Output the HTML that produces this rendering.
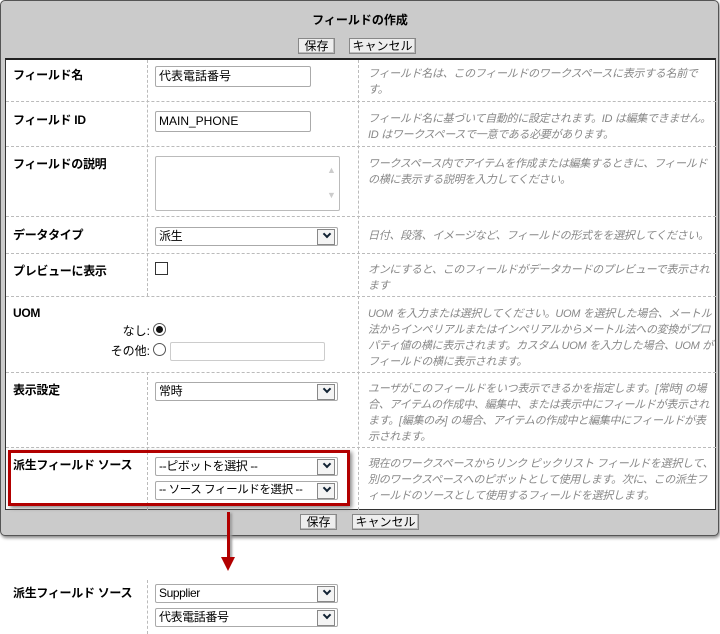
<!DOCTYPE html>
<html><head><meta charset="utf-8"><style>
*{box-sizing:border-box;margin:0;padding:0}
body{width:720px;height:634px;background:#fff;font-family:"Liberation Sans","Noto Sans CJK JP",sans-serif;font-size:12px;color:#000;position:relative;overflow:hidden}
.a{position:absolute}
.panel{left:0;top:0;width:719px;height:536px;background:#cbcbcb;border:1px solid #555;border-radius:5px;box-shadow:1px 2px 3px #888}
.white{left:5px;top:58px;width:711px;height:452px;background:#fff;border:1px solid #333;border-top:2px solid #222}
.btn{height:16px;border:1px solid #888;background:#eee;font-size:12px;line-height:14px;text-align:center;box-shadow:inset -1px -1px 0 #bbb}
.hd{border-top:1px dashed #bbb;height:0}
.vd{border-left:1px dashed #bbb;width:0}
.lbl{font-weight:bold;font-size:12px;left:13px;letter-spacing:-0.3px}
.desc{left:368px;width:346px;color:#888;font-style:italic;font-size:11px;line-height:16px;letter-spacing:-0.3px}
.inp{border:1px solid #aaa;height:21px;background:#fff;padding:2px 3px;font-size:12px;line-height:15px;border-radius:2px}
.sel{border:1px solid #aaa;height:19px;background:#fff;padding:1px 3px;font-size:12px;line-height:15px;border-radius:2px;letter-spacing:-0.4px;white-space:nowrap;overflow:hidden}
.sel:after{content:"";position:absolute;right:2px;top:1px;width:16px;height:14px;border:1px solid #888;background:#f4f4f4}
.sel i{position:absolute;right:7px;top:3px;width:6px;height:6px;border-right:2px solid #123;border-bottom:2px solid #123;transform:rotate(45deg);z-index:2}
</style></head><body>
<div class="a panel"></div>
<div class="a" style="left:0;top:11px;width:720px;text-align:center;font-weight:bold;font-size:12px">フィールドの作成</div>
<div class="a btn" style="left:298px;top:38px;width:37px">保存</div>
<div class="a btn" style="left:349px;top:38px;width:67px">キャンセル</div>
<div class="a white"></div>
<div class="a btn" style="left:300px;top:514px;width:37px">保存</div>
<div class="a btn" style="left:352px;top:514px;width:67px">キャンセル</div>

<div class="a hd" style="left:6px;top:101px;width:710px"></div>
<div class="a hd" style="left:6px;top:146px;width:710px"></div>
<div class="a hd" style="left:6px;top:216px;width:710px"></div>
<div class="a hd" style="left:6px;top:253px;width:710px"></div>
<div class="a hd" style="left:6px;top:296px;width:710px"></div>
<div class="a hd" style="left:6px;top:372px;width:710px"></div>
<div class="a hd" style="left:6px;top:447px;width:710px"></div>
<div class="a vd" style="left:147px;top:60px;height:236px"></div>
<div class="a vd" style="left:147px;top:372px;height:138px"></div>
<div class="a vd" style="left:358px;top:60px;height:450px"></div>

<div class="a lbl" style="top:66px">フィールド名</div>
<div class="a inp" style="left:155px;top:66px;width:156px">代表電話番号</div>
<div class="a desc" style="top:66px">フィールド名は、このフィールドのワークスペースに表示する名前です。</div>

<div class="a lbl" style="top:111px">フィールド ID</div>
<div class="a inp" style="left:155px;top:111px;width:156px">MAIN_PHONE</div>
<div class="a desc" style="top:111px">フィールド名に基づいて自動的に設定されます。ID は編集できません。ID はワークスペースで一意である必要があります。</div>

<div class="a lbl" style="top:155px">フィールドの説明</div>
<div class="a" style="left:155px;top:156px;width:185px;height:55px;border:1px solid #bbb;border-radius:2px"></div>
<div class="a" style="left:327px;top:165px;color:#ccc;font-size:9px">▲</div>
<div class="a" style="left:327px;top:190px;color:#ccc;font-size:9px">▼</div>
<div class="a desc" style="top:156px">ワークスペース内でアイテムを作成または編集するときに、フィールドの横に表示する説明を入力してください。</div>

<div class="a lbl" style="top:226px">データタイプ</div>
<div class="a sel" style="left:155px;top:227px;width:183px">派生<i></i></div>
<div class="a desc" style="top:228px;width:360px">日付、段落、イメージなど、フィールドの形式をを選択してください。</div>

<div class="a lbl" style="top:262px">プレビューに表示</div>
<div class="a" style="left:155px;top:262px;width:13px;height:13px;border:1px solid #333;background:#fff"></div>
<div class="a desc" style="top:262px">オンにすると、このフィールドがデータカードのプレビューで表示されます</div>

<div class="a lbl" style="top:306px">UOM</div>
<div class="a" style="left:110px;top:322px;font-size:12px;text-align:right;width:40px">なし:</div>
<div class="a" style="left:153px;top:323px;width:13px;height:13px;border:1px solid #555;border-radius:50%;background:#fff"><div style="margin:2px;width:7px;height:7px;border-radius:50%;background:#111"></div></div>
<div class="a" style="left:100px;top:342px;font-size:12px;text-align:right;width:50px">その他:</div>
<div class="a" style="left:153px;top:343px;width:13px;height:13px;border:1px solid #555;border-radius:50%;background:#fff"></div>
<div class="a" style="left:170px;top:342px;width:155px;height:19px;border:1px solid #ccc;border-radius:2px"></div>
<div class="a desc" style="top:306px">UOM を入力または選択してください。UOM を選択した場合、メートル法からインペリアルまたはインペリアルからメートル法への変換がプロパティ値の横に表示されます。カスタム UOM を入力した場合、UOM がフィールドの横に表示されます。</div>

<div class="a lbl" style="top:381px">表示設定</div>
<div class="a sel" style="left:155px;top:382px;width:183px">常時<i></i></div>
<div class="a desc" style="top:381px">ユーザがこのフィールドをいつ表示できるかを指定します。[常時] の場合、アイテムの作成中、編集中、または表示中にフィールドが表示されます。[編集のみ] の場合、アイテムの作成中と編集中にフィールドが表示されます。</div>

<div class="a lbl" style="top:456px">派生フィールド ソース</div>
<div class="a sel" style="left:155px;top:457px;width:183px">--ピボットを選択 --<i></i></div>
<div class="a sel" style="left:155px;top:481px;width:183px;font-size:11.5px">-- ソース フィールドを選択 --<i></i></div>
<div class="a desc" style="top:456px">現在のワークスペースからリンク ピックリスト フィールドを選択して、別のワークスペースへのピボットとして使用します。次に、この派生フィールドのソースとして使用するフィールドを選択します。</div>
<div class="a" style="left:8px;top:450px;width:342px;height:56px;border:3px solid #b20000;box-shadow:2px 2px 4px #888"></div>

<div class="a" style="left:227px;top:512px;width:3px;height:48px;background:#b20000;box-shadow:2px 1px 2px #999"></div>
<div class="a" style="left:221px;top:557px;width:0;height:0;border-left:7px solid transparent;border-right:7px solid transparent;border-top:14px solid #b20000"></div>

<div class="a vd" style="left:147px;top:580px;height:54px"></div>
<div class="a lbl" style="top:584px">派生フィールド ソース</div>
<div class="a sel" style="left:155px;top:584px;width:183px">Supplier<i></i></div>
<div class="a sel" style="left:155px;top:608px;width:183px">代表電話番号<i></i></div>
</body></html>
